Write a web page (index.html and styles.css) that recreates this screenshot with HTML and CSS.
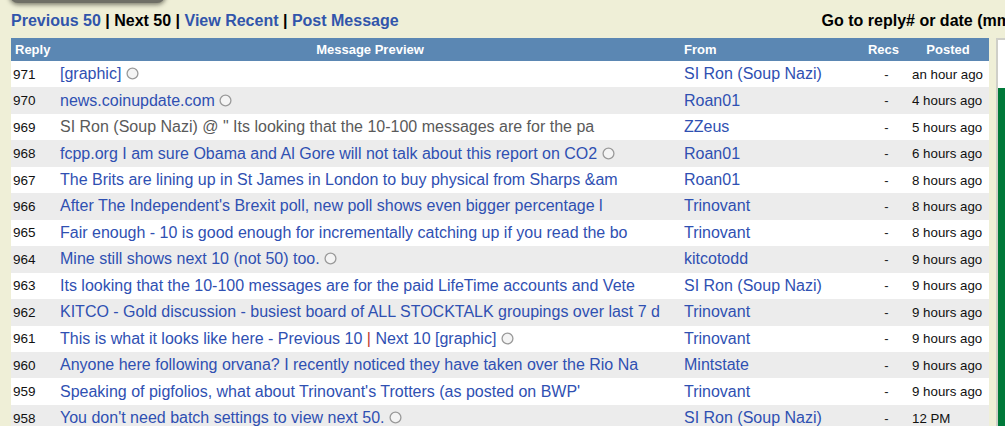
FILE: index.html
```html
<!DOCTYPE html>
<html>
<head>
<meta charset="utf-8">
<link rel="stylesheet" href="styles.css">
</head>
<body>
<div class="topbox"></div>
<div class="nav">
  <div class="navlinks">
    <a class="lnk">Previous 50</a> <span class="sep">|</span> <span class="cur">Next 50</span> <span class="sep">|</span> <a class="lnk">View Recent</a> <span class="sep">|</span> <a class="lnk">Post Message</a>
  </div>
  <div class="goto">Go to reply# or date (mm/dd/yy):</div>
</div>
<div class="main">
  <table class="msgs">
    <colgroup>
      <col class="c-reply"><col class="c-msg"><col class="c-from"><col class="c-recs"><col class="c-posted">
    </colgroup>
    <thead>
      <tr><th class="h-reply">Reply</th><th class="h-msg">Message Preview</th><th class="h-from">From</th><th class="h-recs">Recs</th><th class="h-posted">Posted</th></tr>
    </thead>
    <tbody>
      <tr><td class="num">971</td><td class="msg"><a>[graphic]</a> <svg class="ic" viewBox="0 0 12 12"><circle cx="6" cy="6" r="5"/></svg></td><td class="from"><a>SI Ron (Soup Nazi)</a></td><td class="recs">-</td><td class="posted">an hour ago</td></tr>
      <tr><td class="num">970</td><td class="msg"><a>news.coinupdate.com</a> <svg class="ic" viewBox="0 0 12 12"><circle cx="6" cy="6" r="5"/></svg></td><td class="from"><a>Roan01</a></td><td class="recs">-</td><td class="posted">4 hours ago</td></tr>
      <tr><td class="num">969</td><td class="msg"><a class="visited">SI Ron (Soup Nazi) @ " Its looking that the 10-100 messages are for the pa</a></td><td class="from"><a>ZZeus</a></td><td class="recs">-</td><td class="posted">5 hours ago</td></tr>
      <tr><td class="num">968</td><td class="msg"><a>fcpp.org I am sure Obama and Al Gore will not talk about this report on CO2</a> <svg class="ic" viewBox="0 0 12 12"><circle cx="6" cy="6" r="5"/></svg></td><td class="from"><a>Roan01</a></td><td class="recs">-</td><td class="posted">6 hours ago</td></tr>
      <tr><td class="num">967</td><td class="msg"><a>The Brits are lining up in St James in London to buy physical from Sharps &amp;am</a></td><td class="from"><a>Roan01</a></td><td class="recs">-</td><td class="posted">8 hours ago</td></tr>
      <tr><td class="num">966</td><td class="msg"><a>After The Independent's Brexit poll, new poll shows even bigger percentage l</a></td><td class="from"><a>Trinovant</a></td><td class="recs">-</td><td class="posted">8 hours ago</td></tr>
      <tr><td class="num">965</td><td class="msg"><a>Fair enough - 10 is good enough for incrementally catching up if you read the bo</a></td><td class="from"><a>Trinovant</a></td><td class="recs">-</td><td class="posted">8 hours ago</td></tr>
      <tr><td class="num">964</td><td class="msg"><a>Mine still shows next 10 (not 50) too.</a> <svg class="ic" viewBox="0 0 12 12"><circle cx="6" cy="6" r="5"/></svg></td><td class="from"><a>kitcotodd</a></td><td class="recs">-</td><td class="posted">9 hours ago</td></tr>
      <tr><td class="num">963</td><td class="msg"><a>Its looking that the 10-100 messages are for the paid LifeTime accounts and Vete</a></td><td class="from"><a>SI Ron (Soup Nazi)</a></td><td class="recs">-</td><td class="posted">9 hours ago</td></tr>
      <tr><td class="num">962</td><td class="msg"><a>KITCO - Gold discussion - busiest board of ALL STOCKTALK groupings over last 7 d</a></td><td class="from"><a>Trinovant</a></td><td class="recs">-</td><td class="posted">9 hours ago</td></tr>
      <tr><td class="num">961</td><td class="msg"><a>This is what it looks like here - Previous 10 <span class="pipe">|</span> Next 10 [graphic]</a> <svg class="ic" viewBox="0 0 12 12"><circle cx="6" cy="6" r="5"/></svg></td><td class="from"><a>Trinovant</a></td><td class="recs">-</td><td class="posted">9 hours ago</td></tr>
      <tr><td class="num">960</td><td class="msg"><a>Anyone here following orvana? I recently noticed they have taken over the Rio Na</a></td><td class="from"><a>Mintstate</a></td><td class="recs">-</td><td class="posted">9 hours ago</td></tr>
      <tr><td class="num">959</td><td class="msg"><a>Speaking of pigfolios, what about Trinovant's Trotters (as posted on BWP'</a></td><td class="from"><a>Trinovant</a></td><td class="recs">-</td><td class="posted">9 hours ago</td></tr>
      <tr><td class="num">958</td><td class="msg"><a>You don't need batch settings to view next 50.</a> <svg class="ic" viewBox="0 0 12 12"><circle cx="6" cy="6" r="5"/></svg></td><td class="from"><a>SI Ron (Soup Nazi)</a></td><td class="recs">-</td><td class="posted">12 PM</td></tr>
    </tbody>
  </table>
  <div class="side">
    <div class="side-top"></div>
    <div class="side-green"></div>
  </div>
</div>
</body>
</html>
```
FILE: styles.css
```css
html, body {
  margin: 0;
  padding: 0;
  background: #efefd7;
  overflow: hidden;
  height: 426px;
}
body {
  position: relative;
  padding-left: 11px;
  font-family: "Liberation Sans", Arial, sans-serif;
}
.topbox {
  position: absolute;
  left: 10px;
  top: -28px;
  width: 155px;
  height: 31px;
  border-radius: 8px;
  background: #6f6f66;
  box-shadow: 0 1px 4px 1px rgba(40, 40, 30, 0.55);
}
.nav {
  display: flex;
  align-items: center;
  height: 38px;
  box-sizing: border-box;
  padding-top: 4px;
  font-size: 16px;
  font-weight: bold;
  line-height: 18px;
  white-space: nowrap;
}
.navlinks { flex-shrink: 0; }
.lnk { color: #3155ab; text-decoration: none; }
.sep { color: #000; }
.cur { color: #000; }
.goto {
  flex-shrink: 0;
  margin-left: 423px;
  color: #000;
}
.main {
  display: flex;
  align-items: flex-start;
  gap: 7px;
}
.msgs {
  width: 978px;
  table-layout: fixed;
  border-collapse: collapse;
  flex-shrink: 0;
}
.c-reply { width: 47px; }
.c-msg { width: 624px; }
.c-from { width: 178px; }
.c-recs { width: 47px; }
.c-posted { width: 82px; }
thead tr { background: #5b87b3; height: 23px; }
th {
  color: #fff;
  font-size: 13px;
  font-weight: bold;
  padding: 0;
  white-space: nowrap;
  overflow: hidden;
}
.h-reply { text-align: left; padding-left: 4px; }
.h-msg { text-align: center; }
.h-from { text-align: left; padding-left: 2px; }
.h-recs { text-align: center; }
.h-posted { text-align: center; }
tbody tr { height: 26.46px; background: #fff; }
tbody tr:nth-child(even) { background: #ececec; }
td {
  padding: 0;
  white-space: nowrap;
  overflow: hidden;
  vertical-align: middle;
}
td a { color: #2f50b2; text-decoration: none; }
.num { font-size: 13.5px; color: #111; padding-left: 2px; }
.msg { font-size: 16px; padding-left: 2px; }
.msg a.visited { color: #5a5a5a; }
.pipe { color: #c0392b; }
.from { font-size: 16px; padding-left: 2px; }
.recs { font-size: 13px; text-align: center; color: #222; padding-left: 6px; }
.posted { font-size: 13.3px; color: #111; padding-left: 5px; }
.ic {
  width: 13px;
  height: 13px;
  vertical-align: -1px;
  fill: #f4f4f4;
  stroke: #9a9a9a;
  stroke-width: 1.2;
}
.side {
  flex: 1;
  height: 390px;
  border-left: 2px solid #cfcfc8;
  border-top: 2px solid #cfcfc8;
  display: flex;
  flex-direction: column;
}
.side-top { height: 48px; background: #fff; }
.side-green { flex: 1; background: #007a3a; }
```
